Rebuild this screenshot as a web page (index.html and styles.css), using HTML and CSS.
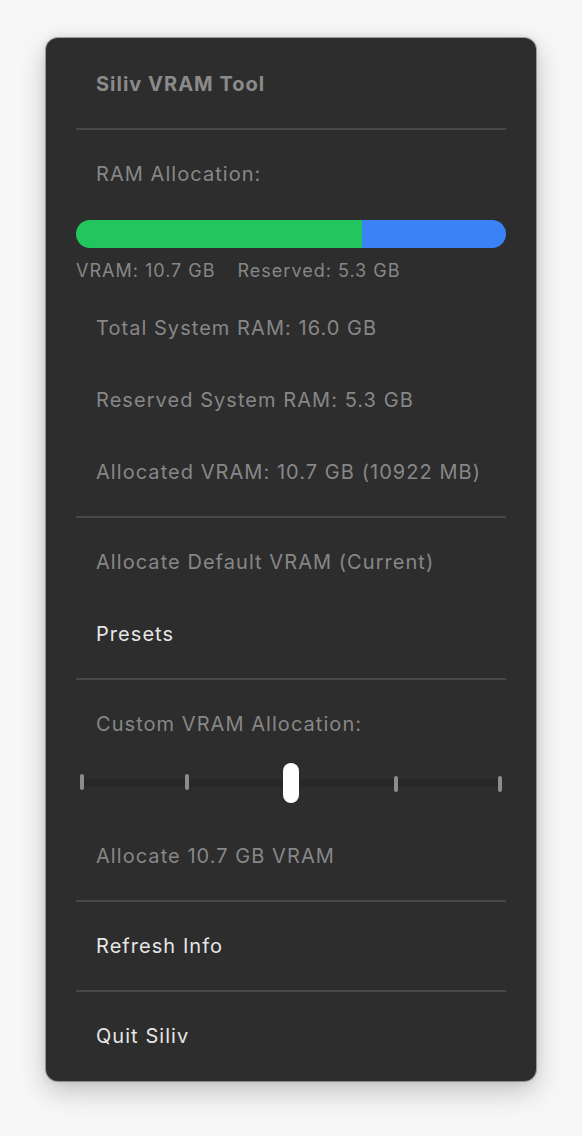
FILE: index.html
```html
<!DOCTYPE html>
<html lang="en">
<head>
<meta charset="utf-8">
<title>Siliv VRAM Tool</title>
<link rel="stylesheet" href="styles.css">
</head>
<body>
<div class="menu">
  <div class="item title">Siliv VRAM Tool</div>
  <div class="sep"></div>
  <div class="item dim">RAM Allocation:</div>
  <div class="bar">
    <div class="bar-vram" style="width: 66.5%"></div>
    <div class="bar-reserved"></div>
  </div>
  <div class="bar-labels">
    <span>VRAM: 10.7 GB</span>
    <span>Reserved: 5.3 GB</span>
  </div>
  <div class="item dim">Total System RAM: 16.0 GB</div>
  <div class="item dim">Reserved System RAM: 5.3 GB</div>
  <div class="item dim">Allocated VRAM: 10.7 GB (10922 MB)</div>
  <div class="sep"></div>
  <div class="item dim">Allocate Default VRAM (Current)</div>
  <div class="item">Presets</div>
  <div class="sep"></div>
  <div class="item dim">Custom VRAM Allocation:</div>
  <div class="slider">
    <div class="track">
      <span class="tick"></span>
      <span class="tick"></span>
      <span class="tick"></span>
      <span class="tick low"></span>
      <span class="tick low"></span>
      <span class="thumb"></span>
    </div>
  </div>
  <div class="item dim">Allocate 10.7 GB VRAM</div>
  <div class="sep"></div>
  <div class="item">Refresh Info</div>
  <div class="sep"></div>
  <div class="item">Quit Siliv</div>
</div>
</body>
</html>
```

FILE: styles.css
```css
html, body {
  margin: 0;
  padding: 0;
  background: #f7f7f7;
}
body {
  padding: 38px 0 55px 46px;
  font-family: Inter, "Noto Sans", "Liberation Sans", sans-serif;
}
.menu {
  box-sizing: border-box;
  width: 490px;
  height: 1043px;
  background: #2d2d2d;
  border-radius: 12px;
  padding: 10px 30px 9px;
  box-shadow: 0 0 0 1px rgba(0,0,0,0.3), 0 10px 28px rgba(0,0,0,0.22), 0 0 8px rgba(0,0,0,0.1);
  display: flex;
  flex-direction: column;
}
.item {
  height: 72px;
  display: flex;
  align-items: center;
  padding-left: 20px;
  font-size: 20px;
  color: #e6e6e6;
  letter-spacing: 1.05px;
}
.item.dim {
  color: #878787;
}
.item.title {
  font-weight: 700;
  color: #8a8a8a;
  letter-spacing: 1px;
}
.sep {
  height: 2px;
  background: #484848;
  margin: 8px 0;
}
.bar {
  margin-top: 10px;
  height: 28px;
  border-radius: 14px;
  overflow: hidden;
  display: flex;
}
.bar-vram {
  background: #22c55e;
}
.bar-reserved {
  flex: 1;
  background: #3b82f6;
}
.bar-labels {
  height: 44px;
  display: flex;
  align-items: center;
  gap: 22px;
  font-size: 18px;
  color: #878787;
  letter-spacing: 1px;
}
.slider {
  height: 60px;
  padding: 3px 4px 17px;
  box-sizing: border-box;
}
.track {
  position: relative;
  height: 40px;
  display: flex;
  justify-content: space-between;
  align-items: center;
}
.track::before {
  content: "";
  position: absolute;
  left: 0;
  right: 0;
  top: 16px;
  height: 8px;
  background: #282828;
}
.tick {
  position: relative;
  width: 4px;
  height: 16px;
  border-radius: 2px;
  background: #8c8c8c;
  margin-top: -2px;
}
.tick.low {
  margin-top: 2px;
}
.thumb {
  position: absolute;
  left: 50%;
  top: 0;
  width: 16px;
  height: 40px;
  margin-left: -8px;
  border-radius: 8px;
  background: #ffffff;
}
```
